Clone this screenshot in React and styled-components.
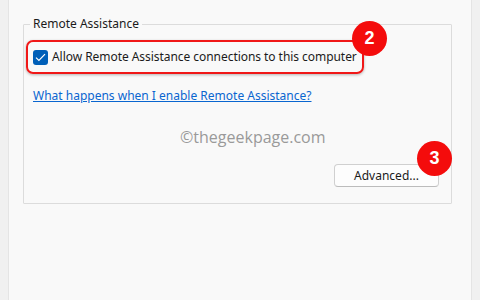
import React from "react";
import styled, { createGlobalStyle } from "styled-components";

const Global = createGlobalStyle`
  html, body { margin: 0; padding: 0; }
  body {
    background: #f0f0f0;
    font-family: "Noto Sans", "Liberation Sans", sans-serif;
    color: #1b1b1b;
  }
`;

const Window = styled.div`
  box-sizing: border-box;
  margin-left: 8px;
  width: 464px;
  height: 300px;
  background: #f9f9f9;
  border-left: 1px solid #e4e4e4;
  border-right: 1px solid #e4e4e4;
  padding: 16px 19px 0 14px;
`;

const GroupBox = styled.fieldset`
  margin: 0;
  padding: 0 12px 16px 0;
  border: 1px solid #dcdcdc;
  border-radius: 1px;
  display: flex;
  flex-direction: column;
`;

const Legend = styled.legend`
  margin-left: 6px;
  padding: 0 3px;
  font-size: 12px;
  line-height: 16px;
  color: #1b1b1b;
`;

const Highlight = styled.div`
  position: relative;
  box-sizing: border-box;
  margin: 8px 0 0 2px;
  width: 338px;
  height: 34px;
  border: 2px solid #f01818;
  border-radius: 7px;
  box-shadow: 0 1px 3px rgba(0, 0, 0, 0.28);
  display: flex;
  align-items: center;
  gap: 4px;
  padding-left: 5px;
`;

const CheckBox = styled.span`
  box-sizing: border-box;
  width: 15px;
  height: 15px;
  border-radius: 3px;
  background: #005fb8;
  display: flex;
  align-items: center;
  justify-content: center;
`;

const CheckLabel = styled.span`
  font-size: 12px;
  line-height: 16px;
  letter-spacing: -0.05px;
  color: #1b1b1b;
  white-space: nowrap;
`;

const Badge = styled.span`
  position: absolute;
  left: ${(p) => p.$left}px;
  top: ${(p) => p.$top}px;
  width: 35px;
  height: 35px;
  border-radius: 50%;
  background: #f40c0c;
  color: #fff;
  font-family: "Liberation Sans", Arial, sans-serif;
  font-weight: 700;
  font-size: 18px;
  display: flex;
  align-items: center;
  justify-content: center;
`;

const HelpLink = styled.a`
  margin: 14px 0 0 9px;
  align-self: flex-start;
  font-size: 12px;
  line-height: 16px;
  color: #0a66d0;
  text-decoration: underline;
  cursor: pointer;
`;

const Watermark = styled.div`
  margin: 22px 0 0 156px;
  font-family: "Open Sans", "Noto Sans", sans-serif;
  font-size: 16px;
  line-height: 22px;
  color: #9a9a9a;
`;

const ButtonRow = styled.div`
  margin-top: 16px;
  display: flex;
  justify-content: flex-end;
`;

const Button = styled.button`
  position: relative;
  box-sizing: border-box;
  width: 105px;
  height: 23px;
  padding: 0;
  border: 1px solid #d0d0d0;
  border-bottom-color: #bcbcbc;
  border-radius: 4px;
  background: #fdfdfd;
  font-family: "Noto Sans", "Liberation Sans", sans-serif;
  font-size: 12px;
  color: #1b1b1b;
`;

const Check = () => (
  <svg width="11" height="9" viewBox="0 0 11 9" fill="none">
    <path d="M1 4.6 L3.9 7.4 L10 1.2" stroke="#fff" strokeWidth="1.2" />
  </svg>
);

export default function App() {
  return (
    <>
      <Global />
      <Window>
        <GroupBox>
          <Legend>Remote Assistance</Legend>
          <Highlight>
            <CheckBox>
              <Check />
            </CheckBox>
            <CheckLabel>Allow Remote Assistance connections to this computer</CheckLabel>
            <Badge $left={324} $top={-21}>2</Badge>
          </Highlight>
          <HelpLink>What happens when I enable Remote Assistance?</HelpLink>
          <Watermark>©thegeekpage.com</Watermark>
          <ButtonRow>
            <Button>
              Advanced...
              <Badge $left={82} $top={-24}>3</Badge>
            </Button>
          </ButtonRow>
        </GroupBox>
      </Window>
    </>
  );
}
